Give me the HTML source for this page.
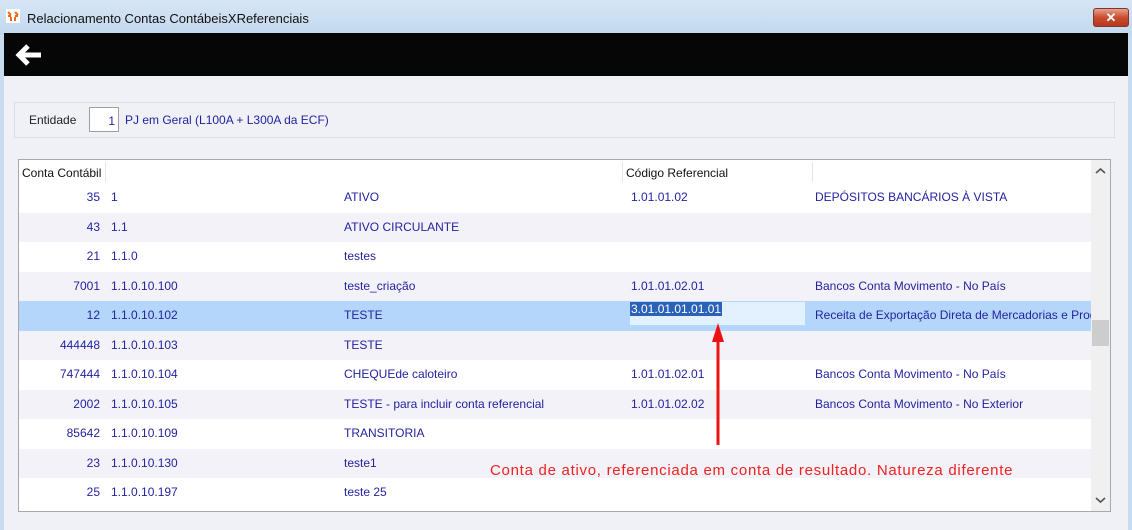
<!DOCTYPE html>
<html><head><meta charset="utf-8"><style>
*{margin:0;padding:0;box-sizing:border-box}
body{width:1132px;height:530px;overflow:hidden;background:#c9dcef;font-family:"Liberation Sans",sans-serif;font-size:12px;position:relative}
.title{position:absolute;left:0;top:0;width:1132px;height:35px;background:linear-gradient(#d7e6f5,#c3d8ee)}
.title span{position:absolute;left:27px;top:11px;font-size:13px;color:#111}
.close{position:absolute;left:1093px;top:8px;width:36px;height:19px;border:1px solid #7a3a2e;border-radius:3px;background:linear-gradient(#e8a08c,#c84c30 50%,#b8361c);color:#fff;font-weight:bold;text-align:center;line-height:17px;font-size:13px}
.client{position:absolute;left:4px;top:33px;width:1124px;height:497px;background:#f0f0f7}
.black{position:absolute;left:4px;top:33px;width:1124px;height:43px;background:#060606}
.ent{position:absolute;left:14px;top:102px;width:1101px;height:36px;border:1px solid #dcdce2}
.tbl{position:absolute;left:18px;top:159px;width:1093px;height:353px;border:1px solid #a8a8a8;background:#fff;overflow:hidden}
.row{position:absolute;left:0;width:1072px;height:29.5px;color:#2323a0}
.row span{position:absolute;top:7px;white-space:nowrap}
.g{background:#f2f2f8}
.s{background:#b5d6fb}
.sb{position:absolute;left:1072px;top:0;width:19px;height:351px;background:#f0f0f0}
</style></head><body>
<div class="title"><svg style="position:absolute;left:6px;top:9px" width="14" height="14"><rect width="14" height="14" fill="#fff"/><path d="M2 3l3 3M9 3l3 3M5 8v4M9 8v4M2 7h3M9 7h3" stroke="#f06a1c" stroke-width="2"/></svg><span>Relacionamento Contas ContábeisXReferenciais</span></div>
<div class="close">✕</div>
<div class="client"></div>
<div class="black"><svg style="position:absolute;left:7px;top:9px" width="34" height="26"><path d="M30 13H8M17 4l-9 9 9 9" stroke="#fff" stroke-width="5" fill="none" stroke-linejoin="miter"/></svg></div>
<div class="ent">
<span style="position:absolute;left:14px;top:10px;color:#222">Entidade</span>
<div style="position:absolute;left:74px;top:4px;width:30px;height:25px;background:#fff;border:1px solid #a0a0a0;text-align:right;padding:6px 3px 0 0;color:#2323a0">1</div>
<span style="position:absolute;left:110px;top:10px;color:#2323a0">PJ em Geral (L100A + L300A da ECF)</span>
</div>
<div class="tbl">
<div style="position:absolute;left:0;top:0;width:1072px;height:23px;color:#111">
<span style="position:absolute;left:3px;top:6px">Conta Contábil</span>
<div style="position:absolute;left:86px;top:2px;width:1px;height:20px;background:#e4e4e4"></div>
<span style="position:absolute;left:607px;top:6px">Código Referencial</span>
<div style="position:absolute;left:603px;top:2px;width:1px;height:20px;background:#e4e4e4"></div>
<div style="position:absolute;left:793px;top:2px;width:1px;height:20px;background:#e4e4e4"></div>
</div>
<div class="row" style="top:23px"><span style="right:991px">35</span><span style="left:92px">1</span><span style="left:325px">ATIVO</span><span style="left:612px">1.01.01.02</span><span style="left:796px">DEPÓSITOS BANCÁRIOS À VISTA</span></div>
<div class="row g" style="top:52.5px"><span style="right:991px">43</span><span style="left:92px">1.1</span><span style="left:325px">ATIVO CIRCULANTE</span></div>
<div class="row" style="top:82px"><span style="right:991px">21</span><span style="left:92px">1.1.0</span><span style="left:325px">testes</span></div>
<div class="row g" style="top:111.5px"><span style="right:991px">7001</span><span style="left:92px">1.1.0.10.100</span><span style="left:325px">teste_criação</span><span style="left:612px">1.01.01.02.01</span><span style="left:796px">Bancos Conta Movimento - No País</span></div>
<div class="row s" style="top:141px"><div style="position:absolute;left:611px;top:1px;width:175px;height:23px;background:#e3f0fd"></div><span style="right:991px">12</span><span style="left:92px">1.1.0.10.102</span><span style="left:325px">TESTE</span><span style="left:611px;top:1px;background:#2a62b8;color:#fff;padding:0 1px">3.01.01.01.01.01</span><span style="left:796px">Receita de Exportação Direta de Mercadorias e Produtos</span></div>
<div class="row g" style="top:170.5px"><span style="right:991px">444448</span><span style="left:92px">1.1.0.10.103</span><span style="left:325px">TESTE</span></div>
<div class="row" style="top:200px"><span style="right:991px">747444</span><span style="left:92px">1.1.0.10.104</span><span style="left:325px">CHEQUEde caloteiro</span><span style="left:612px">1.01.01.02.01</span><span style="left:796px">Bancos Conta Movimento - No País</span></div>
<div class="row g" style="top:229.5px"><span style="right:991px">2002</span><span style="left:92px">1.1.0.10.105</span><span style="left:325px">TESTE - para incluir conta referencial</span><span style="left:612px">1.01.01.02.02</span><span style="left:796px">Bancos Conta Movimento - No Exterior</span></div>
<div class="row" style="top:259px"><span style="right:991px">85642</span><span style="left:92px">1.1.0.10.109</span><span style="left:325px">TRANSITORIA</span></div>
<div class="row g" style="top:288.5px"><span style="right:991px">23</span><span style="left:92px">1.1.0.10.130</span><span style="left:325px">teste1</span></div>
<div class="row" style="top:318px"><span style="right:991px">25</span><span style="left:92px">1.1.0.10.197</span><span style="left:325px">teste 25</span></div>
<div class="sb"><div style="position:absolute;left:1px;top:160px;width:17px;height:26px;background:#cdcdcd"></div>
<svg style="position:absolute;left:4px;top:7px" width="11" height="8"><path d="M1 6l4.5-4 4.5 4" stroke="#555" stroke-width="1.6" fill="none"/></svg>
<svg style="position:absolute;left:4px;top:336px" width="11" height="8"><path d="M1 2l4.5 4 4.5-4" stroke="#555" stroke-width="1.6" fill="none"/></svg></div>
</div>
<svg style="position:absolute;left:710px;top:320px" width="16" height="126"><path d="M8 125V16" stroke="#ee1111" stroke-width="3"/><path d="M2 22L8 3l6 19z" fill="#ee1111"/></svg>
<div style="position:absolute;left:490px;top:462px;color:#ee2222;font-size:15px;letter-spacing:0.72px">Conta de ativo, referenciada em conta de resultado. Natureza diferente</div>
</body></html>
